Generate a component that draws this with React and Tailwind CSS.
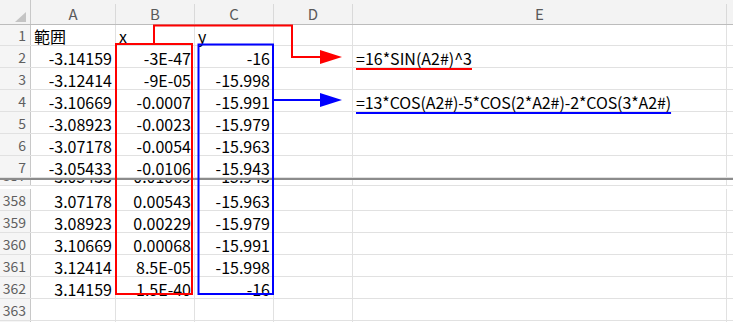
import React from 'react';

const font = "font-['Noto_Sans_CJK_JP','Noto_Sans',sans-serif]";

const topRows = [
  { n: 1, h: 'h-[21px]', a: '範囲', b: 'x', c: 'y', text: true },
  { n: 2, a: '-3.14159', b: '-3E-47', c: '-16', e: 'sin' },
  { n: 3, a: '-3.12414', b: '-9E-05', c: '-15.998' },
  { n: 4, a: '-3.10669', b: '-0.0007', c: '-15.991', e: 'cos' },
  { n: 5, a: '-3.08923', b: '-0.0023', c: '-15.979' },
  { n: 6, a: '-3.07178', b: '-0.0054', c: '-15.963' },
  { n: 7, a: '-3.05433', b: '-0.0106', c: '-15.943' },
];

const bottomRows = [
  { n: 358, a: '3.07178', b: '0.00543', c: '-15.963' },
  { n: 359, a: '3.08923', b: '0.00229', c: '-15.979' },
  { n: 360, a: '3.10669', b: '0.00068', c: '-15.991' },
  { n: 361, a: '3.12414', b: '8.5E-05', c: '-15.998' },
  { n: 362, a: '3.14159', b: '1.5E-40', c: '-16' },
  { n: 363 },
];

const cell = 'h-full border-r border-[#e1e1e1] flex items-end pb-[1px] overflow-visible whitespace-nowrap';

const Formula = ({ kind }) => {
  if (kind === 'sin') {
    return (
      <span className="underline decoration-[#ff0000] decoration-2 underline-offset-[3px]">=16*SIN(A2#)^3</span>
    );
  }
  if (kind === 'cos') {
    return (
      <span className="underline decoration-[#0000ff] decoration-2 underline-offset-[3px] tracking-[-0.1px]">
        =13*COS(A2#)-5*COS(2*A2#)-2*COS(3*A2#)
      </span>
    );
  }
  return null;
};

const Row = ({ row, h = 'h-[22px]' }) => {
  const align = row.text ? 'justify-start pl-[3px]' : 'justify-end pr-[3px]';
  return (
    <div className={`flex ${row.h || h} border-b border-[#e1e1e1] text-[16px] leading-none text-black`}>
      <div className="w-[31px] h-full border-r border-[#c8c8c8] bg-[#f5f5f5] flex items-end justify-end pr-[4px] pb-[3px] text-[14px] text-[#5f5f5f]">
        {row.n}
      </div>
      <div className={`w-[85px] ${cell} ${align}`}>{row.a}</div>
      <div className={`w-[79px] ${cell} ${align}`}>{row.b}</div>
      <div className={`w-[79px] ${cell} ${align}`}>{row.c}</div>
      <div className={`w-[79px] ${cell}`} />
      <div className={`w-[374px] ${cell} pl-[3px] relative z-10`}>
        {row.e && <Formula kind={row.e} />}
      </div>
      <div className="flex-1" />
    </div>
  );
};

const ColHeader = () => (
  <div className="flex h-[25px] bg-[#f3f3f3] border-b border-[#bcbcbc] text-[15px] leading-none text-[#5a5a5a]">
    <div className="w-[31px] h-full border-r border-[#c8c8c8] flex items-end justify-end pr-[4px] pb-[2px]">
      <svg width="11" height="10" viewBox="0 0 11 10">
        <polygon points="11,0 11,10 0,10" fill="#c4c4c4" />
      </svg>
    </div>
    {[
      ['A', 'w-[85px]'],
      ['B', 'w-[79px]'],
      ['C', 'w-[79px]'],
      ['D', 'w-[79px]'],
      ['E', 'w-[374px]'],
    ].map(([l, w]) => (
      <div key={l} className={`${w} h-full pt-[4px]`}>
        <div className="h-full border-r border-[#d9d9d9] flex items-center justify-center pb-[2px]">{l}</div>
      </div>
    ))}
    <div className="flex-1" />
  </div>
);

// boxes and arrows drawn over the grid
const Callouts = () => (
  <svg className="absolute top-0 left-0 pointer-events-none z-20" width="733" height="322" viewBox="0 0 733 322">
    <rect x="116" y="44" width="76" height="250" fill="none" stroke="#ff0000" strokeWidth="2" />
    <polyline points="154,44 154,25.5 292,25.5 292,57 322,57" fill="none" stroke="#ff0000" strokeWidth="2" />
    <polygon points="320,50 342,57 320,64" fill="#ff0000" />
    <rect x="198.5" y="44.5" width="74.5" height="249.5" fill="none" stroke="#0000ff" strokeWidth="2" />
    <line x1="273" y1="100" x2="322" y2="100" stroke="#0000ff" strokeWidth="2" />
    <polygon points="320,93 342,100 320,107" fill="#0000ff" />
  </svg>
);

export default function App() {
  return (
    <div className={`relative w-[733px] h-[322px] overflow-hidden bg-white ${font}`}>
      <ColHeader />
      {topRows.map((r) => (
        <Row key={r.n} row={r} />
      ))}
      <div className="h-[2px] bg-[#8c8c8c]" />
      {/* row 357 scrolled mostly out of view */}
      <div className="h-[9px] overflow-hidden">
        <div className="-mt-[16px]">
          <Row row={{ n: 357, a: '3.05433', b: '0.01069', c: '-15.943' }} />
        </div>
      </div>
      {bottomRows.map((r) => (
        <Row key={r.n} row={r} />
      ))}
      <Row row={{ n: 364 }} />
      <Callouts />
    </div>
  );
}
